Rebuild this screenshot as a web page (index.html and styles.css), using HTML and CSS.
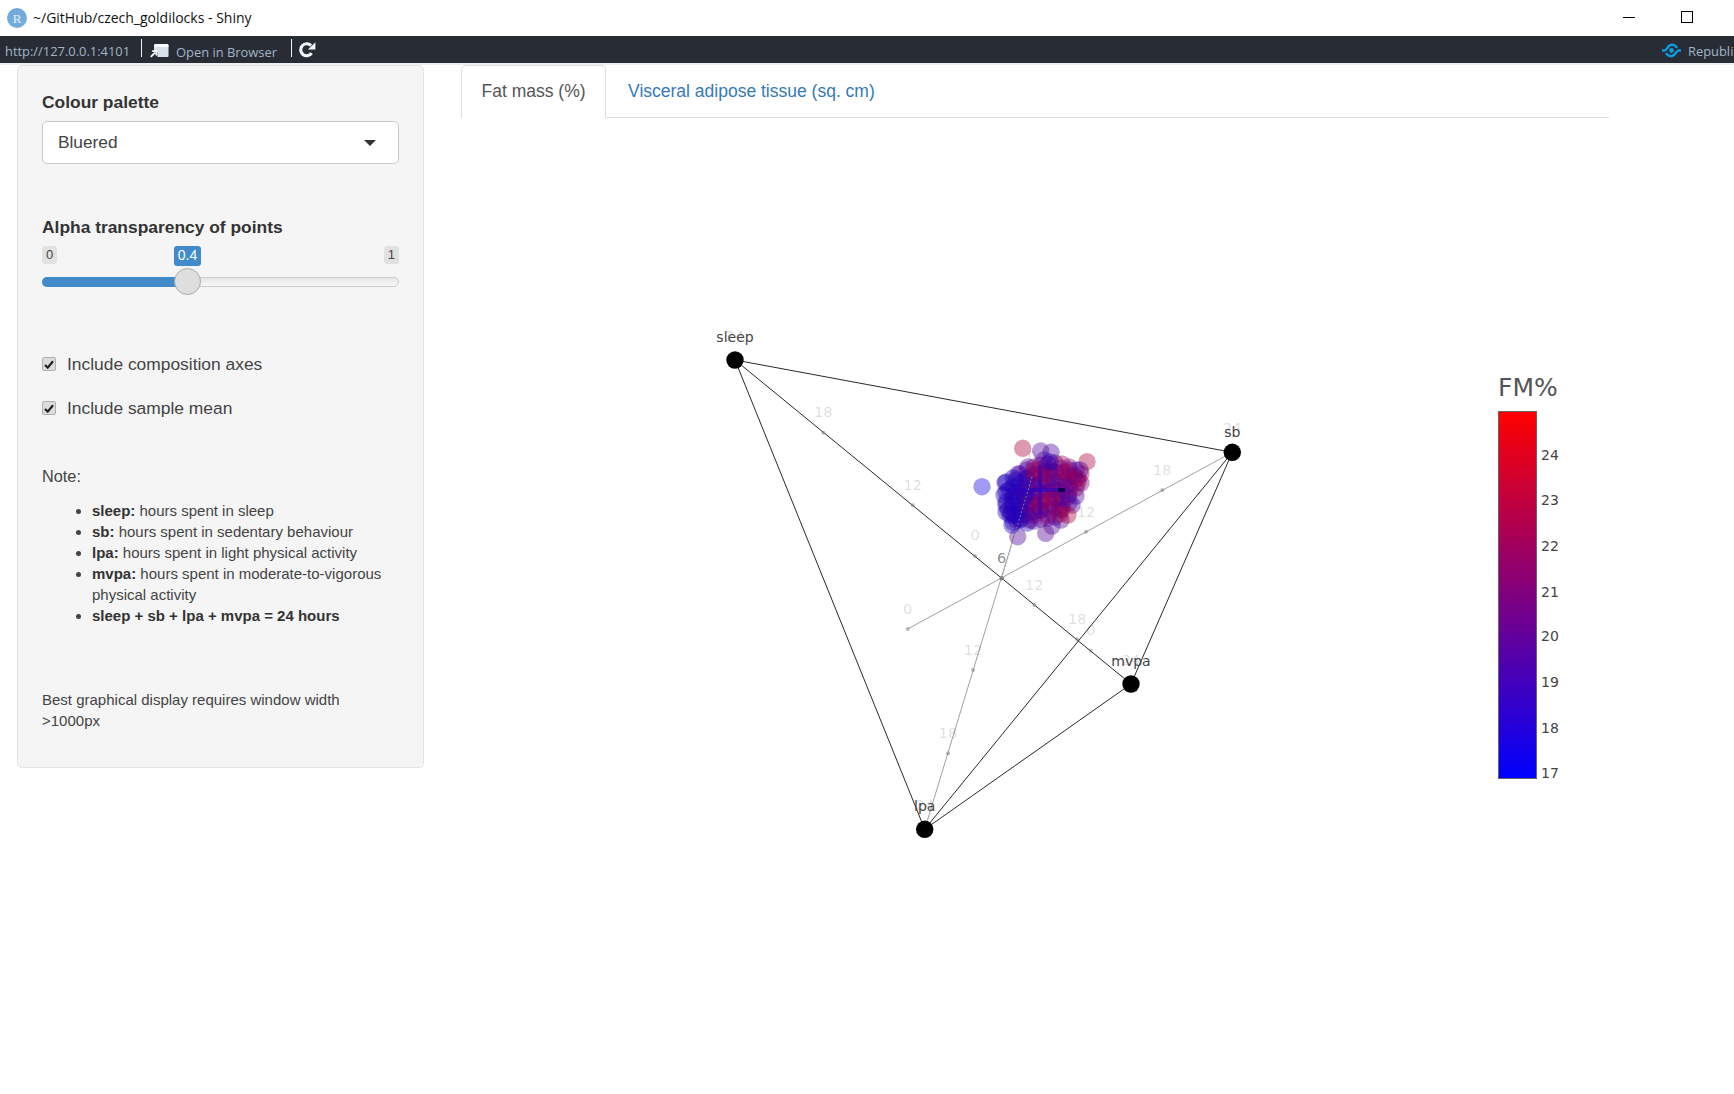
FILE: index.html
```html
<!DOCTYPE html>
<html lang="en">
<head>
<meta charset="utf-8">
<title>~/GitHub/czech_goldilocks - Shiny</title>
<link rel="stylesheet" href="styles.css">
</head>
<body>
<header class="titlebar">
  <div class="title-left">
    <svg class="r-icon" width="20" height="20" viewBox="0 0 20 20"><circle cx="10" cy="10" r="10" fill="#75abdc"/><text x="10" y="14.5" text-anchor="middle" class="r-letter">R</text></svg>
    <span class="title-text">~/GitHub/czech_goldilocks - Shiny</span>
  </div>
  <div class="window-controls">
    <svg width="12" height="12" viewBox="0 0 12 12"><path d="M0 6.5H12" stroke="#000" stroke-width="1"/></svg>
    <svg width="12" height="12" viewBox="0 0 12 12"><rect x=".5" y=".5" width="11" height="11" fill="none" stroke="#000" stroke-width="1"/></svg>
  </div>
</header>
<nav class="toolbar">
  <span class="url">http://127.0.0.1:4101</span>
  <span class="tool-sep"></span>
  <svg class="open-icon" width="19" height="15" viewBox="0 0 19 15"><path d="M4 2.5 Q4 1 5.5 1H17q1.5 0 1.5 1.5V13q0 1-1 1H7.5V9H4Z" fill="#d6e2ee"/><path d="M4 2.5 Q4 1 5.5 1H17q1.5 0 1.5 1.5V4H4Z" fill="#fff"/><path d="M.8 13.8 5 9.6M2.2 8.2H6.4V12.4" fill="none" stroke="#fff" stroke-width="1.8"/></svg>
  <span class="open-text">Open in Browser</span>
  <span class="tool-sep sep-2"></span>
  <svg class="refresh-icon" width="18" height="18" viewBox="0 0 18 18"><path d="M13.6 12.2A6 6 0 1 1 13 4.6" fill="none" stroke="#f4f6f8" stroke-width="3.2"/><path d="M17.4 1.2V8.6H10Z" fill="#f4f6f8"/></svg>
  <span class="publish">
    <svg width="21" height="15" viewBox="0 0 21 15"><path d="M1 7.5H3.5C6 7.5 6.5 1.8 11 1.8C13.5 1.8 15 3.2 16 4.8" fill="none" stroke="#0f9ae0" stroke-width="2.4"/><path d="M20 7.5H17.5C15 7.5 14.5 13.2 10 13.2C7.5 13.2 6 11.8 5 10.2" fill="none" stroke="#0f9ae0" stroke-width="2.4"/><circle cx="10.5" cy="7.5" r="2.4" fill="#0f9ae0"/></svg>
    <span class="publish-text">Republish</span>
  </span>
</nav>
<div class="content">
  <aside class="panel">
    <div class="field-label first">Colour palette</div>
    <div class="select"><span>Bluered</span><span class="caret"></span></div>
    <div class="field-label second">Alpha transparency of points</div>
    <div class="slider">
      <div class="slider-labels">
        <span class="bound">0</span>
        <span class="current">0.4</span>
        <span class="bound">1</span>
      </div>
      <div class="track"><div class="fill"></div><div class="handle"></div></div>
    </div>
    <label class="check first-check"><span class="box"><svg width="10" height="9" viewBox="0 0 10 9"><path d="M1 5 3.7 7.6 9 1.2" fill="none" stroke="#222" stroke-width="2.2"/></svg></span>Include composition axes</label>
    <label class="check"><span class="box"><svg width="10" height="9" viewBox="0 0 10 9"><path d="M1 5 3.7 7.6 9 1.2" fill="none" stroke="#222" stroke-width="2.2"/></svg></span>Include sample mean</label>
    <p class="note">Note:</p>
    <ul class="defs">
      <li><b>sleep:</b> hours spent in sleep</li>
      <li><b>sb:</b> hours spent in sedentary behaviour</li>
      <li><b>lpa:</b> hours spent in light physical activity</li>
      <li><b>mvpa:</b> hours spent in moderate-to-vigorous physical activity</li>
      <li><b>sleep + sb + lpa + mvpa = 24 hours</b></li>
    </ul>
    <p class="best">Best graphical display requires window width &gt;1000px</p>
  </aside>
  <main class="main">
    <div class="tabs">
      <a class="tab active">Fat mass (%)</a>
      <a class="tab">Visceral adipose tissue (sq. cm)</a>
    </div>
    <svg class="plot" width="1148" height="900" viewBox="461 118 1148 900">
      <defs>
        <linearGradient id="scale" x1="0" y1="1" x2="0" y2="0"><stop offset="0" stop-color="#0000ff"/><stop offset="1" stop-color="#ff0000"/></linearGradient>
      </defs>
      <!-- tetrahedron edges -->
      <g class="edge">
        <path d="M735 360 1232.3 452.3"/><path d="M735 360 924.7 829.3"/><path d="M1232.3 452.3 924.7 829.3"/>
        <path d="M924.7 829.3 1131 684"/><path d="M1232.3 452.3 1131 684"/><path d="M735 360 1131 684"/>
      </g>
      <g class="axis">
        <path d="M1232.3 452.3 907.7 629"/><path d="M924.7 829.3 1032.3 476"/>
      </g>
      <g class="tick">
        <circle cx="823.3" cy="432.7"/><circle cx="912.7" cy="505.3"/><circle cx="1090.7" cy="650.7"/>
        <circle cx="975" cy="556"/><circle cx="1034.3" cy="605"/><circle cx="1077.3" cy="639.3"/>
        <circle cx="1162.3" cy="490"/><circle cx="1086" cy="531.7"/><circle cx="907.7" cy="629"/>
        <circle cx="973" cy="670"/><circle cx="948" cy="753.3"/>
        <circle cx="1001.7" cy="578.3"/><circle cx="1001.7" cy="578.3"/><circle cx="1001.7" cy="578.3"/><circle cx="1001.7" cy="578.3"/>
      </g>
      <g class="tick-label">
        <text x="735" y="341">24</text><text x="823.3" y="417">18</text><text x="912.7" y="490">12</text><text x="1090.7" y="635">0</text>
        <text x="1131" y="665">24</text><text x="975" y="540">0</text><text x="1034.3" y="590">12</text><text x="1077.3" y="624">18</text>
        <text x="1232.3" y="433">24</text><text x="1162.3" y="475">18</text><text x="1086" y="517">12</text><text x="907.7" y="614">0</text>
        <text x="924.7" y="810">24</text><text x="948" y="738">18</text><text x="973" y="655">12</text>
        <text x="1001.7" y="563">6</text><text x="1001.7" y="563">6</text><text x="1001.7" y="563">6</text><text x="1001.7" y="563">6</text>
        <text x="1032.3" y="461">0</text>
      </g>
      <!-- points: dense underlay, then the individual visible ones -->
      <g>
        <circle class="pt blue" cx="1006" cy="482"/><circle class="pt blue" cx="1006" cy="492"/><circle class="pt blue" cx="1006" cy="502"/><circle class="pt blue" cx="1006" cy="512"/>
        <circle class="pt blue" cx="1013" cy="478"/><circle class="pt blue" cx="1013" cy="487"/><circle class="pt blue" cx="1013" cy="496"/><circle class="pt blue" cx="1013" cy="505"/><circle class="pt blue" cx="1013" cy="514"/><circle class="pt blue" cx="1013" cy="522"/>
        <circle class="pt blue" cx="1020" cy="474"/><circle class="pt blue" cx="1020" cy="483"/><circle class="pt purple" cx="1020" cy="492"/><circle class="pt blue" cx="1020" cy="501"/><circle class="pt purple" cx="1020" cy="510"/><circle class="pt blue" cx="1020" cy="519"/>
        <circle class="pt purple" cx="1027" cy="470"/><circle class="pt purple" cx="1027" cy="479"/><circle class="pt blue" cx="1027" cy="488"/><circle class="pt purple" cx="1027" cy="497"/><circle class="pt magenta" cx="1027" cy="506"/><circle class="pt purple" cx="1027" cy="515"/><circle class="pt blue" cx="1027" cy="523"/>
        <circle class="pt magenta" cx="1034" cy="467"/><circle class="pt purple" cx="1034" cy="476"/><circle class="pt blue" cx="1034" cy="485"/><circle class="pt magenta" cx="1034" cy="494"/><circle class="pt magenta" cx="1034" cy="503"/><circle class="pt purple" cx="1034" cy="512"/><circle class="pt purple" cx="1034" cy="521"/>
        <circle class="pt magenta" cx="1041" cy="465"/><circle class="pt magenta" cx="1041" cy="474"/><circle class="pt purple" cx="1041" cy="483"/><circle class="pt magenta" cx="1041" cy="492"/><circle class="pt red" cx="1041" cy="501"/><circle class="pt magenta" cx="1041" cy="510"/><circle class="pt purple" cx="1041" cy="519"/>
        <circle class="pt purple" cx="1048" cy="464"/><circle class="pt magenta" cx="1048" cy="473"/><circle class="pt purple" cx="1048" cy="482"/><circle class="pt magenta" cx="1048" cy="491"/><circle class="pt magenta" cx="1048" cy="500"/><circle class="pt purple" cx="1048" cy="509"/><circle class="pt magenta" cx="1048" cy="518"/>
        <circle class="pt magenta" cx="1055" cy="463"/><circle class="pt blue" cx="1055" cy="472"/><circle class="pt purple" cx="1055" cy="481"/><circle class="pt magenta" cx="1055" cy="490"/><circle class="pt purple" cx="1055" cy="499"/><circle class="pt magenta" cx="1055" cy="508"/><circle class="pt purple" cx="1055" cy="517"/>
        <circle class="pt red" cx="1062" cy="464"/><circle class="pt magenta" cx="1062" cy="473"/><circle class="pt purple" cx="1062" cy="482"/><circle class="pt magenta" cx="1062" cy="491"/><circle class="pt purple" cx="1062" cy="500"/><circle class="pt pink" cx="1062" cy="509"/>
        <circle class="pt magenta" cx="1069" cy="467"/><circle class="pt red" cx="1069" cy="476"/><circle class="pt magenta" cx="1069" cy="485"/><circle class="pt purple" cx="1069" cy="494"/><circle class="pt purple" cx="1069" cy="503"/>
        <circle class="pt blue" cx="1076" cy="470"/><circle class="pt magenta" cx="1076" cy="479"/><circle class="pt red" cx="1076" cy="488"/><circle class="pt purple" cx="1076" cy="496"/>
        <circle class="pt red" cx="1081" cy="474"/><circle class="pt magenta" cx="1081" cy="483"/>
      </g>
      <g>
        <circle class="pt pink" cx="1022.7" cy="448.3"/><circle class="pt pink" cx="1087" cy="461.7"/><circle class="pt outlier" cx="982" cy="486.7"/>
        <circle class="pt purple" cx="1017.7" cy="536.7"/><circle class="pt purple" cx="1045.7" cy="533.3"/><circle class="pt purple" cx="1040.7" cy="451"/><circle class="pt purple" cx="1051" cy="452.3"/>
        <circle class="pt purple" cx="1016" cy="520"/><circle class="pt purple" cx="1008" cy="510"/><circle class="pt purple" cx="1018" cy="474"/><circle class="pt purple" cx="1028" cy="467"/><circle class="pt purple" cx="1044" cy="460"/><circle class="pt purple" cx="1061" cy="520"/><circle class="pt purple" cx="1052" cy="526"/><circle class="pt purple" cx="1072" cy="505"/><circle class="pt purple" cx="1080" cy="470"/><circle class="pt purple" cx="1068" cy="497"/>
        <circle class="pt blue" cx="1012" cy="525"/><circle class="pt blue" cx="1009" cy="490"/><circle class="pt blue" cx="1016" cy="480"/><circle class="pt blue" cx="1006" cy="505"/><circle class="pt blue" cx="1010" cy="515"/><circle class="pt blue" cx="1020" cy="520"/><circle class="pt blue" cx="1014" cy="497"/><circle class="pt blue" cx="1022" cy="488"/><circle class="pt blue" cx="1005" cy="483"/><circle class="pt blue" cx="1018" cy="507"/><circle class="pt blue" cx="1027" cy="478"/><circle class="pt blue" cx="1011" cy="512"/><circle class="pt blue" cx="1024" cy="514"/><circle class="pt blue" cx="1030" cy="500"/><circle class="pt blue" cx="1017" cy="492"/><circle class="pt blue" cx="1050" cy="470"/><circle class="pt blue" cx="1074" cy="476"/>
        <circle class="pt magenta" cx="1034" cy="474"/><circle class="pt magenta" cx="1044" cy="468"/><circle class="pt magenta" cx="1060" cy="468"/><circle class="pt magenta" cx="1069" cy="470"/><circle class="pt magenta" cx="1078" cy="482"/><circle class="pt magenta" cx="1036" cy="505"/><circle class="pt magenta" cx="1027" cy="505"/><circle class="pt magenta" cx="1034" cy="515"/><circle class="pt magenta" cx="1042" cy="500"/><circle class="pt magenta" cx="1058" cy="490"/><circle class="pt magenta" cx="1052" cy="505"/><circle class="pt magenta" cx="1048" cy="515"/><circle class="pt magenta" cx="1062" cy="505"/><circle class="pt magenta" cx="1070" cy="488"/><circle class="pt magenta" cx="1037" cy="484"/><circle class="pt magenta" cx="1052" cy="478"/><circle class="pt magenta" cx="1064" cy="478"/>
        <circle class="pt purple" cx="1024" cy="495"/><circle class="pt purple" cx="1030" cy="485"/><circle class="pt purple" cx="1038" cy="492"/><circle class="pt purple" cx="1040" cy="510"/><circle class="pt purple" cx="1052" cy="488"/><circle class="pt purple" cx="1058" cy="498"/><circle class="pt purple" cx="1046" cy="480"/><circle class="pt purple" cx="1066" cy="485"/><circle class="pt purple" cx="1030" cy="520"/><circle class="pt purple" cx="1060" cy="510"/>
        <circle class="pt red" cx="1035" cy="470"/><circle class="pt red" cx="1066" cy="472"/><circle class="pt red" cx="1078" cy="478"/><circle class="pt red" cx="1040" cy="503"/><circle class="pt red" cx="1052" cy="498"/><circle class="pt red" cx="1060" cy="514"/><circle class="pt pink" cx="1068" cy="515"/><circle class="pt red" cx="1045" cy="475"/>
        <circle class="pt blue" cx="1020" cy="510"/><circle class="pt blue" cx="1012" cy="503"/><circle class="pt blue" cx="1025" cy="497"/><circle class="pt blue" cx="1015" cy="515"/><circle class="pt blue" cx="1004" cy="495"/><circle class="pt blue" cx="1050" cy="462"/>
      </g>
      <g class="mean">
        <path d="M1040 465V515"/><path d="M1015 490H1065"/>
      </g>
      <path class="mean-end" d="M1058 490H1065"/>
      <path class="axis-over" d="M1001.7 578.3 1032.3 476"/>
      <!-- vertices -->
      <g class="vertex">
        <circle cx="735" cy="360"/><circle cx="1232.3" cy="452.3"/><circle cx="1131" cy="684"/><circle cx="924.7" cy="829.3"/>
      </g>
      <g class="node-label">
        <text x="735" y="342">sleep</text><text x="1232.3" y="437">sb</text><text x="1131" y="666">mvpa</text><text x="924.7" y="811">lpa</text>
      </g>
      <!-- colour scale -->
      <text class="scale-title" x="1498" y="396">FM%</text>
      <rect class="scale-bar" x="1498.5" y="411.5" width="38" height="367" fill="url(#scale)"/>
      <g class="scale-label">
        <text x="1541" y="460">24</text><text x="1541" y="505">23</text><text x="1541" y="551">22</text><text x="1541" y="597">21</text>
        <text x="1541" y="641">20</text><text x="1541" y="687">19</text><text x="1541" y="733">18</text><text x="1541" y="778">17</text>
      </g>
    </svg>
  </main>
</div>
</body>
</html>
```
FILE: styles.css
```css
html, body { margin: 0; padding: 0; }
body {
  width: 1734px;
  height: 1094px;
  overflow: hidden;
  background: #fff;
  color: #333;
  font-family: "Liberation Sans", Arial, sans-serif;
  font-size: 17.4px;
}
.titlebar {
  height: 36px;
  display: flex;
  justify-content: space-between;
  align-items: center;
  background: #fff;
}
.title-left { display: flex; align-items: center; padding-left: 7px; }
.r-icon { display: block; }
.r-letter { font-family: "Liberation Serif", serif; font-size: 13px; fill: #e6f0fa; }
.title-text { margin-left: 6px; margin-top: -2px; font-family: "Open Sans", sans-serif; font-size: 14px; color: #111; }
.window-controls { display: flex; gap: 46px; padding-right: 41px; margin-top: -2px; }
.window-controls svg { display: block; }
.toolbar {
  height: 27px;
  display: flex;
  align-items: center;
  background: #282c34;
  border-bottom: 2px solid #eceef0;
  box-sizing: content-box;
  overflow: hidden;
  font-family: "Open Sans", sans-serif;
  font-size: 12.9px;
  color: #a3b5c7;
}
.url { margin-left: 5px; margin-top: 2px; width: 126px; white-space: nowrap; }
.tool-sep { width: 1px; height: 18px; background: #eef1f4; margin-left: 10px; margin-top: -4px; }
.open-icon { margin-left: 8px; margin-top: 2px; }
.open-text { margin-left: 7px; margin-top: 4px; width: 100px; white-space: nowrap; }
.sep-2 { margin-left: 15px; }
.refresh-icon { margin-left: 6px; }
.publish { margin-left: auto; display: flex; align-items: center; width: 73px; flex: none; white-space: nowrap; }
.publish svg { flex: none; margin-top: 1px; }
.publish-text { margin-left: 6px; margin-top: 3px; }
.content { display: flex; align-items: flex-start; }
.panel {
  box-sizing: border-box;
  width: 407px;
  height: 703px;
  margin-left: 17px;
  padding: 0 24px;
  background: #f5f5f5;
  border: 1px solid #e3e3e3;
  border-radius: 5px;
  flex: none;
}
.field-label { font-weight: bold; line-height: 20px; }
.first { margin-top: 26px; }
.select {
  box-sizing: border-box;
  height: 43px;
  margin-top: 9px;
  padding: 0 15px;
  display: flex;
  align-items: center;
  justify-content: space-between;
  background: #fff;
  border: 1px solid #c8c8c8;
  border-radius: 5px;
  font-size: 17.3px;
  color: #444;
}
.caret { width: 0; height: 0; margin-right: 7px; border-left: 6px solid transparent; border-right: 6px solid transparent; border-top: 6px solid #333; }
.second { margin-top: 53px; }
.slider { margin-top: 9px; }
.slider-labels { display: flex; justify-content: space-between; align-items: flex-start; position: relative; height: 20px; }
.bound { padding: 0 4px; height: 18px; line-height: 17px; font-size: 13px; background: #e1e1e1; border-radius: 3px; color: #444; }
.current { position: absolute; left: 132px; top: 0; width: 27px; height: 20px; line-height: 19px; text-align: center; font-size: 14px; background: #428bca; color: #fff; border-radius: 3px; }
.track { position: relative; height: 10px; margin-top: 11px; border: 1px solid #ccc; box-sizing: border-box; border-radius: 5px; background: linear-gradient(#e6e6e6, #f8f8f8); }
.fill { height: 10px; width: 145px; margin: -1px; background: #428bca; border-radius: 5px 0 0 5px; }
.handle { position: absolute; left: 131px; top: -10px; width: 27px; height: 27px; box-sizing: border-box; border-radius: 50%; background: #dedede; border: 1px solid #aaa; }
.check { display: flex; align-items: center; height: 20px; color: #444; line-height: 20px; margin-top: 24px; }
.first-check { margin-top: 67px; }
.box { box-sizing: border-box; width: 14px; height: 14px; margin-right: 11px; display: flex; align-items: center; justify-content: center; background: #dcdcdc; border: 1px solid #b0b0b0; border-radius: 2px; }
.box svg { display: block; }
.note { margin: 48px 0 0; font-size: 16.3px; line-height: 20px; color: #444; }
.defs { margin: 14px 0 0; padding-left: 50px; font-size: 15px; line-height: 21px; color: #444; }
.defs b { color: #333; }
.best { margin: 63px 0 0; font-size: 15px; line-height: 21px; color: #444; }
.main { margin-left: 37px; width: 1148px; flex: none; }
.tabs { display: flex; height: 53px; box-sizing: border-box; border-bottom: 1px solid #ddd; font-size: 17.5px; }
.tab { box-sizing: border-box; height: 53px; padding: 15px 21px 0; line-height: 20px; color: #337ab7; white-space: nowrap; border: 1px solid transparent; }
.tab.active { color: #555; background: #fff; border-color: #ddd #ddd #fff; border-radius: 5px 5px 0 0; padding: 15px 19.5px 0; }
.plot { display: block; }
.edge path { fill: none; stroke: #111; stroke-width: .9; }
.axis path { fill: none; stroke: #888; stroke-width: .8; }
.axis-over { fill: none; stroke: #999; stroke-width: .8; stroke-dasharray: 2 2; }
.tick circle { r: 2px; fill: #777; opacity: .5; }
.tick-label text { font-family: "DejaVu Sans", sans-serif; font-size: 14.5px; fill: #000; fill-opacity: .15; text-anchor: middle; }
.pt { r: 8.7px; opacity: .4; }
.outlier { fill: #1100e6; }
.blue { fill: #2200b8; }
.purple { fill: #4d0098; }
.magenta { fill: #7a0078; }
.red { fill: #a00050; }
.pink { fill: #aa0039; }
.mean path { fill: none; stroke: #2a00c0; stroke-width: 4; opacity: .55; }
.mean-end { fill: none; stroke: #100050; stroke-width: 4; }
.vertex circle { r: 8.7px; fill: #000; }
.node-label text { font-family: "DejaVu Sans", sans-serif; font-size: 14px; fill: #444; text-anchor: middle; }
.scale-title { font-family: "DejaVu Sans", sans-serif; font-size: 25px; fill: #555; }
.scale-bar { stroke: #666; stroke-width: 1; }
.scale-label text { font-family: "DejaVu Sans", sans-serif; font-size: 14px; fill: #444; }
```
